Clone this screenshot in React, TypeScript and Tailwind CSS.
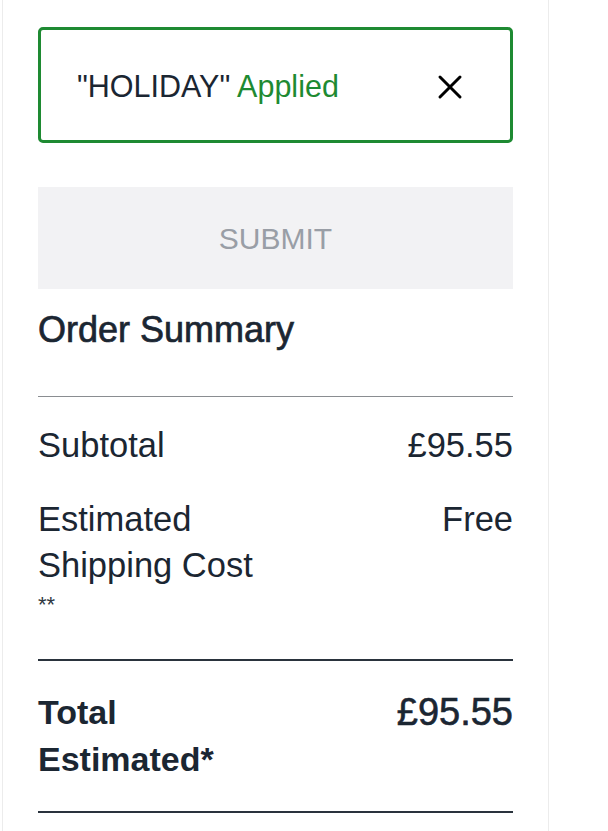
import { X } from 'lucide-react';

const font = "font-['Liberation_Sans',Arial,sans-serif]";

function Row({ label, value }: { label: React.ReactNode; value: string }) {
  return (
    <div className="flex justify-between items-start">
      <div className="text-[34.5px] leading-[46px]">{label}</div>
      <div className="text-[34.5px] leading-[46px]">{value}</div>
    </div>
  );
}

export default function App() {
  return (
    <div className={`${font} bg-white min-h-[831px] text-[#1b2632]`}>
      <div className="ml-[2px] w-[547px] min-h-[831px] border-x border-[#ececec] px-[35px] pt-[27px]">
        {/* Promo code applied */}
        <div className="h-[116px] rounded-[5px] border-[3px] border-[#1e8a32] flex items-center justify-between pl-[36px] pr-[40px]">
          <div className="text-[30.5px] leading-none mt-[2px]">
            <span>"HOLIDAY"</span>{' '}
            <span className="text-[#1e8a32]">Applied</span>
          </div>
          <X className="w-[40px] h-[40px] text-black mt-[3px]" strokeWidth={1.8} />
        </div>

        {/* Submit */}
        <button className="mt-[44px] w-full h-[102px] bg-[#f2f2f4] text-[#999ea6] text-[30px]">
          SUBMIT
        </button>

        {/* Order Summary */}
        <h3 className="mt-[19px] text-[36px] leading-[44px] [-webkit-text-stroke:0.7px_#1b2632]">
          Order Summary
        </h3>
        <div className="mt-[44px] border-t-[1.5px] border-[#8a8d91]" />

        <div className="mt-[25px]">
          <Row label="Subtotal" value="£95.55" />
        </div>
        <div className="mt-[28px]">
          <Row
            label={
              <>
                Estimated
                <br />
                Shipping Cost
              </>
            }
            value="Free"
          />
          <div className="text-[22px] leading-[24px] mt-[5px] text-[#2f3842]">**</div>
        </div>
        <div className="mt-[42px] border-t-2 border-[#2a333d]" />

        <div className="mt-[28px] flex justify-between items-start">
          <div className="text-[34px] leading-[47px] font-bold">
            Total
            <br />
            Estimated*
          </div>
          <div className="text-[38px] leading-[47px] [-webkit-text-stroke:0.6px_#1b2632]">£95.55</div>
        </div>
        <div className="mt-[28px] border-t-2 border-[#2a333d]" />
      </div>
    </div>
  );
}
